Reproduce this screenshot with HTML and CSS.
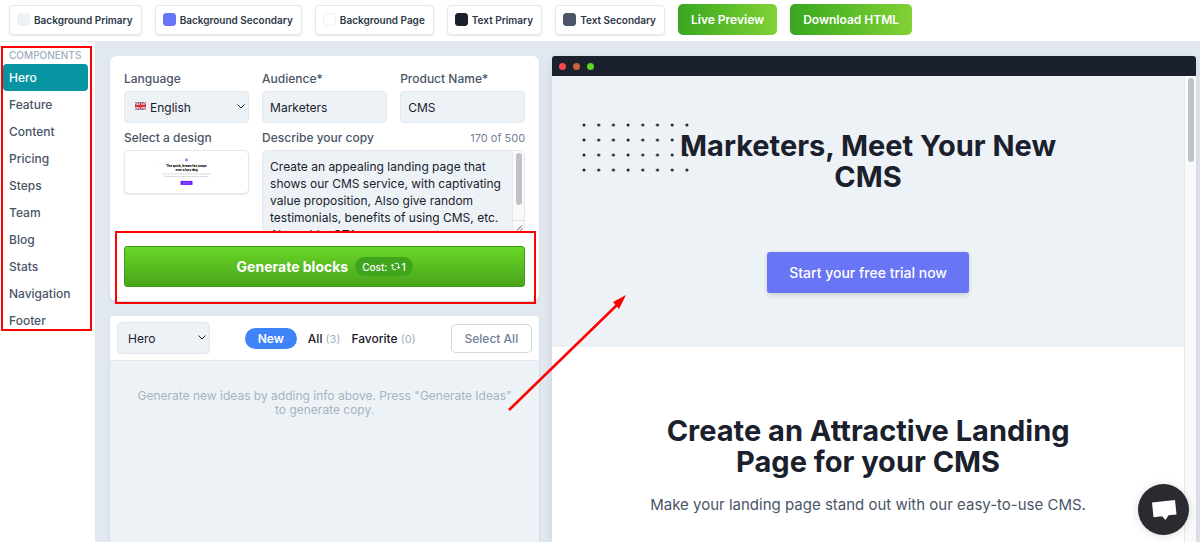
FILE: index.html
```html
<!DOCTYPE html>
<html lang="en">

<head>
    <meta charset="UTF-8">
    <meta name="viewport" content="width=device-width, initial-scale=1.0">
    <title>Landing Page Builder</title>
    <link rel="stylesheet" href="styles.css">
</head>

<body>
    <header class="toolbar">
        <button type="button" class="chip"><span class="swatch swatch-primary"></span>Background Primary</button>
        <button type="button" class="chip"><span class="swatch swatch-secondary"></span>Background Secondary</button>
        <button type="button" class="chip"><span class="swatch swatch-page"></span>Background Page</button>
        <button type="button" class="chip"><span class="swatch swatch-text"></span>Text Primary</button>
        <button type="button" class="chip"><span class="swatch swatch-muted"></span>Text Secondary</button>
        <button type="button" class="action">Live Preview</button>
        <button type="button" class="action">Download HTML</button>
    </header>

    <div class="layout">
        <aside class="sidebar">
            <nav class="components">
                <h2 class="components-title">COMPONENTS</h2>
                <a href="#" class="component active">Hero</a>
                <a href="#" class="component">Feature</a>
                <a href="#" class="component">Content</a>
                <a href="#" class="component">Pricing</a>
                <a href="#" class="component">Steps</a>
                <a href="#" class="component">Team</a>
                <a href="#" class="component">Blog</a>
                <a href="#" class="component">Stats</a>
                <a href="#" class="component">Navigation</a>
                <a href="#" class="component">Footer</a>
            </nav>
        </aside>

        <main class="workspace">
            <div class="editor">
                <form class="card copy-form">
                    <div class="fields">
                        <div class="field">
                            <label for="language">Language</label>
                            <div class="select-wrap">
                                <svg class="flag" viewBox="0 0 12 8" aria-hidden="true">
                                    <rect width="12" height="8" rx="1" fill="#2b3f87"/>
                                    <path d="M0 0l12 8M12 0L0 8" stroke="#fff" stroke-width="2"/>
                                    <path d="M0 0l12 8M12 0L0 8" stroke="#e02c34" stroke-width="1"/>
                                    <path d="M6 0v8M0 4h12" stroke="#fff" stroke-width="3"/>
                                    <path d="M6 0v8M0 4h12" stroke="#e02c34" stroke-width="2"/>
                                </svg>
                                <select id="language" class="with-flag">
                                    <option>English</option>
                                </select>
                                <svg class="chevron" viewBox="0 0 8 5"><path d="M.5.5L4 4 7.500.5"/></svg>
                            </div>
                        </div>
                        <div class="field">
                            <label for="audience">Audience*</label>
                            <input type="text" id="audience" value="Marketers">
                        </div>
                        <div class="field">
                            <label for="product">Product Name*</label>
                            <input type="text" id="product" value="CMS">
                        </div>
                        <div class="field">
                            <span class="field-title">Select a design</span>
                            <button type="button" class="design" aria-label="Hero design">
                                <svg viewBox="0 0 124 42">
                                    <circle cx="62" cy="9" r="1.500" fill="#7c8cf8"/>
                                    <path d="M31 11h11M31 14h11" stroke="#d5dae2" stroke-width=".5" stroke-dasharray=".5 2"/>
                                    <text x="62" y="16" class="thumb-title">The quick, brown fox jumps</text>
                                    <text x="62" y="20" class="thumb-title">over a lazy dog</text>
                                    <path d="M38 23h48M40 25.500h44" stroke="#c3c8d0" stroke-width=".8" stroke-dasharray="2 .5"/>
                                    <rect x="56" y="30" width="12" height="4" fill="#6a1cff"/>
                                    <path d="M58 32h8" stroke="#b794ff" stroke-width=".7"/>
                                </svg>
                            </button>
                        </div>
                        <div class="field field-wide">
                            <div class="field-head">
                                <label for="copy">Describe your copy</label>
                                <span class="counter">170 of 500</span>
                            </div>
                            <div class="textarea-wrap">
                                <textarea id="copy">Create an appealing landing page that shows our CMS service, with captivating value proposition, Also give random testimonials, benefits of using CMS, etc. Also add a CTA.</textarea>
                                <div class="scrollbar"><span class="thumb"></span></div>
                                <svg class="grip" viewBox="0 0 12 12" aria-hidden="true"><path d="M0 .5h12" stroke="#e2e2e2"/><path d="M5 10.500l5-5M8.500 10.500l2-2" stroke="#555"/></svg>
                            </div>
                        </div>
                    </div>
                    <button type="submit" class="generate">
                        Generate blocks
                        <span class="cost">Cost:
                            <svg viewBox="0 0 10 10"><path d="M4 1.500h2.500a2 2 0 0 1 2 2v3.500M6.500 5.500l2 2 1.500-2M6 8.500H3.500a2 2 0 0 1-2-2V3M0 4.500l1.500-2 2 2"/></svg><span>1</span></span>
                    </button>
                </form>

                <section class="card results">
                    <div class="results-bar">
                        <div class="select-wrap type-select">
                            <select aria-label="Component type">
                                <option>Hero</option>
                            </select>
                            <svg class="chevron" viewBox="0 0 8 5"><path d="M.5.5L4 4 7.500.5"/></svg>
                        </div>
                        <div class="tabs">
                            <button type="button" class="tab tab-active">New</button>
                            <button type="button" class="tab">All <span>(3)</span></button>
                            <button type="button" class="tab">Favorite <span>(0)</span></button>
                        </div>
                        <button type="button" class="select-all">Select All</button>
                    </div>
                    <p class="empty">Generate new ideas by adding info above. Press "Generate Ideas" to generate copy.</p>
                </section>
            </div>

            <section class="preview">
                <div class="window-bar">
                    <span class="dot dot-red"></span>
                    <span class="dot dot-orange"></span>
                    <span class="dot dot-green"></span>
                </div>
                <div class="viewport">
                    <div class="page">
                        <div class="hero">
                            <svg class="dots" viewBox="0 0 108 60" aria-hidden="true">
                                <defs>
                                    <pattern id="grid" width="14.700" height="15" patternUnits="userSpaceOnUse">
                                        <circle cx="2" cy="2" r="1.500" fill="#1a202c"/>
                                    </pattern>
                                </defs>
                                <rect width="108" height="60" fill="url(#grid)"/>
                            </svg>
                            <h1 class="headline">Marketers, Meet Your New CMS</h1>
                            <button type="button" class="cta">Start your free trial now</button>
                        </div>
                        <div class="feature">
                            <h2 class="headline">Create an Attractive Landing Page for your CMS</h2>
                            <p>Make your landing page stand out with our easy-to-use CMS.</p>
                        </div>
                    </div>
                    <div class="scrollbar"><span class="thumb"></span></div>
                </div>
            </section>
        </main>
    </div>

    <svg class="arrow" viewBox="0 0 118 117" aria-hidden="true">
        <path d="M1 115L110 9" stroke="#f00" stroke-width="2.500" fill="none"/>
        <path d="M118 0L105 7l6 7z" fill="#f00"/>
    </svg>

    <button type="button" class="chat" aria-label="Open chat">
        <svg viewBox="0 0 26 22"><path d="M1 3.500L24 1l1.500 14.500-8 .7L14.500 21 11 17.200l-8.500 1z" fill="#fff"/></svg>
    </button>
</body>

</html>
```

FILE: styles.css
```css
* {
    box-sizing: border-box;
}

body {
    margin: 0;
    height: 100vh;
    display: flex;
    flex-direction: column;
    overflow: hidden;
    font-family: Inter, "Liberation Sans", sans-serif;
    font-size: 12px;
    color: #1a202c;
    background: #e2e8f0;
}

button, input, select, textarea {
    font: inherit;
    color: inherit;
    margin: 0;
}

button {
    cursor: pointer;
    white-space: nowrap;
}

h1, h2, p {
    margin: 0;
}

/* top bar */
.toolbar {
    display: flex;
    align-items: center;
    gap: 13px;
    padding: 4px 9px 6px;
    background: #fff;
    border-bottom: 1px solid #e2e8f0;
}

.chip {
    display: flex;
    align-items: center;
    gap: 4px;
    height: 30px;
    padding: 0 8px 0 7px;
    font-size: 10px;
    font-weight: 600;
    color: #2d3748;
    background: #fff;
    border: 1px solid #e2e8f0;
    border-radius: 4px;
    box-shadow: 0 1px 2px rgba(0, 0, 0, 0.1);
}

.swatch {
    width: 13px;
    height: 13px;
    border-radius: 3px;
    border: 1px solid #edf2f7;
}

.swatch-primary { background: #edf2f7; }
.swatch-secondary { background: #6875f5; border-color: #6875f5; }
.swatch-page { background: #fff; }
.swatch-text { background: #1a202c; border-color: #1a202c; }
.swatch-muted { background: #4a5568; border-color: #4a5568; }

.action {
    height: 31px;
    padding: 0 13px;
    font-weight: 600;
    color: #fff;
    background: linear-gradient(90deg, #38a71f, #82d235);
    border: 0;
    border-radius: 5px;
}

/* sidebar */
.layout {
    flex: 1;
    display: flex;
    min-height: 0;
}

.sidebar {
    width: 95px;
    flex-shrink: 0;
    background: #fff;
}

.components {
    position: relative;
    display: flex;
    flex-direction: column;
    padding: 6px 7px 0 3px;
}

.components::after {
    content: "";
    position: absolute;
    top: 4px;
    right: 3px;
    bottom: 3px;
    left: 1px;
    border: 2px solid #f00;
    pointer-events: none;
}

.components-title {
    margin-bottom: 2px;
    padding: 0 6px;
    font-size: 10px;
    line-height: 14px;
    font-weight: 500;
    color: #a0aec0;
}

.component {
    padding: 0 6px;
    line-height: 27px;
    font-weight: 500;
    color: #4a5568;
    text-decoration: none;
    border-radius: 4px;
}

.component.active {
    color: #fff;
    background: #0694a2;
}

/* editor column */
.workspace {
    flex: 1;
    display: grid;
    grid-template-columns: 2fr 3fr;
    gap: 13px;
    min-width: 0;
    padding: 14px 4px 0 15px;
}

.editor {
    display: flex;
    flex-direction: column;
    gap: 15px;
    min-width: 0;
    min-height: 0;
}

.card {
    background: #fff;
    border-radius: 6px;
    box-shadow: 0 1px 3px rgba(0, 0, 0, 0.1);
}

.copy-form {
    position: relative;
    padding: 14px;
}

/* highlight around the generate button */
.copy-form::after {
    content: "";
    position: absolute;
    right: 3px;
    bottom: -3px;
    left: 5px;
    height: 69px;
    border: 2px solid #f00;
    pointer-events: none;
}

.fields {
    display: grid;
    grid-template-columns: repeat(3, minmax(0, 1fr));
    gap: 6px 13px;
}

.field-wide {
    grid-column: span 2;
}

.field {
    display: flex;
    flex-direction: column;
    gap: 3px;
}

.field label, .field-title {
    line-height: 18px;
    font-weight: 500;
    color: #4a5568;
}

.field-head {
    display: flex;
    justify-content: space-between;
}

.counter {
    font-size: 11px;
    line-height: 18px;
    color: #718096;
}

input, select, textarea {
    width: 100%;
    height: 32px;
    padding: 0 7px;
    background: #edf2f7;
    border: 1px solid #e2e8f0;
    border-radius: 4px;
    outline: 0;
}

.select-wrap, .textarea-wrap {
    position: relative;
}

select {
    display: block;
    appearance: none;
    padding-left: 10px;
}

select.with-flag {
    padding-left: 25px;
}

.flag {
    position: absolute;
    top: 11px;
    left: 11px;
    width: 11px;
    height: 8px;
}

.chevron {
    position: absolute;
    top: 13px;
    right: 4px;
    width: 8px;
    height: 5px;
    fill: none;
    stroke: #1a202c;
    pointer-events: none;
}

textarea {
    display: block;
    height: 83px;
    padding: 7px 19px 7px 7px;
    line-height: 17px;
    resize: none;
    scrollbar-width: none;
}

.scrollbar {
    width: 12px;
    flex-shrink: 0;
    padding: 2px 2px 2px 3px;
    background: #fafafa;
    border-left: 1px solid #e6e8eb;
}

.thumb {
    display: block;
    height: 84px;
    background: #c0c2c8;
    border-radius: 4px;
}

.textarea-wrap .scrollbar {
    position: absolute;
    top: 1px;
    right: 1px;
    bottom: 1px;
}

.textarea-wrap .thumb {
    height: 52px;
}

.grip {
    position: absolute;
    right: 1px;
    bottom: 1px;
    width: 12px;
    height: 12px;
    fill: none;
}

.design {
    height: 44px;
    padding: 0;
    background: #fff;
    border: 1px solid #e2e8f0;
    border-radius: 5px;
    box-shadow: 0 1px 2px rgba(0, 0, 0, 0.1);
}

.design svg {
    display: block;
    width: 100%;
    height: 42px;
}

.thumb-title {
    font-size: 3px;
    font-weight: 800;
    text-anchor: middle;
}

.generate {
    display: flex;
    align-items: center;
    justify-content: center;
    gap: 7px;
    width: 100%;
    height: 41px;
    margin-top: 13px;
    font-size: 14px;
    font-weight: 700;
    color: #fff;
    background: linear-gradient(#68d626, #4aa51c);
    border: 1px solid #3f9a18;
    border-radius: 3px;
}

.cost {
    display: flex;
    align-items: center;
    height: 19px;
    padding: 0 7px;
    gap: 4px;
    font-size: 10px;
    font-weight: 500;
    background: #3fa51d;
    border-radius: 10px;
}

.cost svg {
    width: 9px;
    height: 9px;
    margin-right: -3px;
    fill: none;
    stroke: #fff;
}

/* results */
.results {
    flex: 1;
    background: #edf2f7;
    border-radius: 4px 4px 0 0;
}

.results-bar {
    display: flex;
    align-items: center;
    justify-content: space-between;
    padding: 6px 7px;
    background: #fff;
    border-bottom: 1px solid #e2e8f0;
    border-radius: 4px 4px 0 0;
}

.type-select {
    width: 93px;
}

.tabs {
    display: flex;
    align-items: center;
    gap: 11px;
}

.tab {
    height: 21px;
    padding: 0;
    font-weight: 500;
    background: none;
    border: 0;
}

.tab span {
    font-size: 11px;
    font-weight: 400;
    color: #a0aec0;
}

.tab-active {
    padding: 0 13px;
    font-weight: 600;
    color: #fff;
    background: #3f83f8;
    border-radius: 11px;
}

.select-all {
    height: 29px;
    padding: 0 13px;
    font-weight: 500;
    color: #718096;
    background: #fff;
    border: 1px solid #d2d6dc;
    border-radius: 5px;
}

.empty {
    padding: 28px 24px;
    line-height: 14px;
    text-align: center;
    color: #a9b3bf;
}

/* preview column */
.preview {
    display: flex;
    flex-direction: column;
    min-width: 0;
    min-height: 0;
    box-shadow: 0 4px 10px rgba(0, 0, 0, 0.1);
}

.window-bar {
    display: flex;
    align-items: center;
    gap: 7px;
    height: 20px;
    flex-shrink: 0;
    padding: 0 7px;
    background: #1a202c;
    border-radius: 3px 3px 0 0;
}

.dot {
    width: 7px;
    height: 7px;
    border-radius: 50%;
}

.dot-red { background: #f74a4a; }
.dot-orange { background: #c8623a; }
.dot-green { background: #62d226; }

.viewport {
    flex: 1;
    display: flex;
    min-height: 0;
}

.page {
    flex: 1;
    min-width: 0;
    overflow-y: auto;
    scrollbar-width: none;
    background: #fff;
}

.hero, .feature {
    position: relative;
    display: flex;
    flex-direction: column;
    align-items: center;
    padding: 54px 90px;
    text-align: center;
}

.hero {
    background: #edf2f7;
}

.dots {
    position: absolute;
    top: 47px;
    left: 30px;
    width: 108px;
    height: 60px;
}

.headline {
    position: relative;
    max-width: 420px;
    font-size: 29px;
    line-height: 31px;
    font-weight: 700;
}

.cta {
    height: 41px;
    margin-top: 60px;
    padding: 0 22px;
    font-size: 14px;
    font-weight: 500;
    color: #fff;
    background: #6875f5;
    border: 0;
    border-radius: 3px;
    box-shadow: 0 2px 5px rgba(0, 0, 0, 0.15);
}

.feature {
    padding: 68px 40px 400px;
}

.feature p {
    margin-top: 15px;
    font-size: 15px;
    line-height: 26px;
    color: #4a5568;
}

.arrow {
    position: absolute;
    top: 295px;
    left: 508px;
    width: 118px;
    height: 117px;
    pointer-events: none;
}

.chat {
    position: fixed;
    right: 11px;
    bottom: 7px;
    display: flex;
    align-items: center;
    justify-content: center;
    width: 51px;
    height: 51px;
    padding: 0;
    background: #2a2b30;
    border: 0;
    border-radius: 50%;
    box-shadow: 0 1px 8px rgba(0, 0, 0, 0.15);
}

.chat svg {
    width: 26px;
    height: 22px;
}
```
